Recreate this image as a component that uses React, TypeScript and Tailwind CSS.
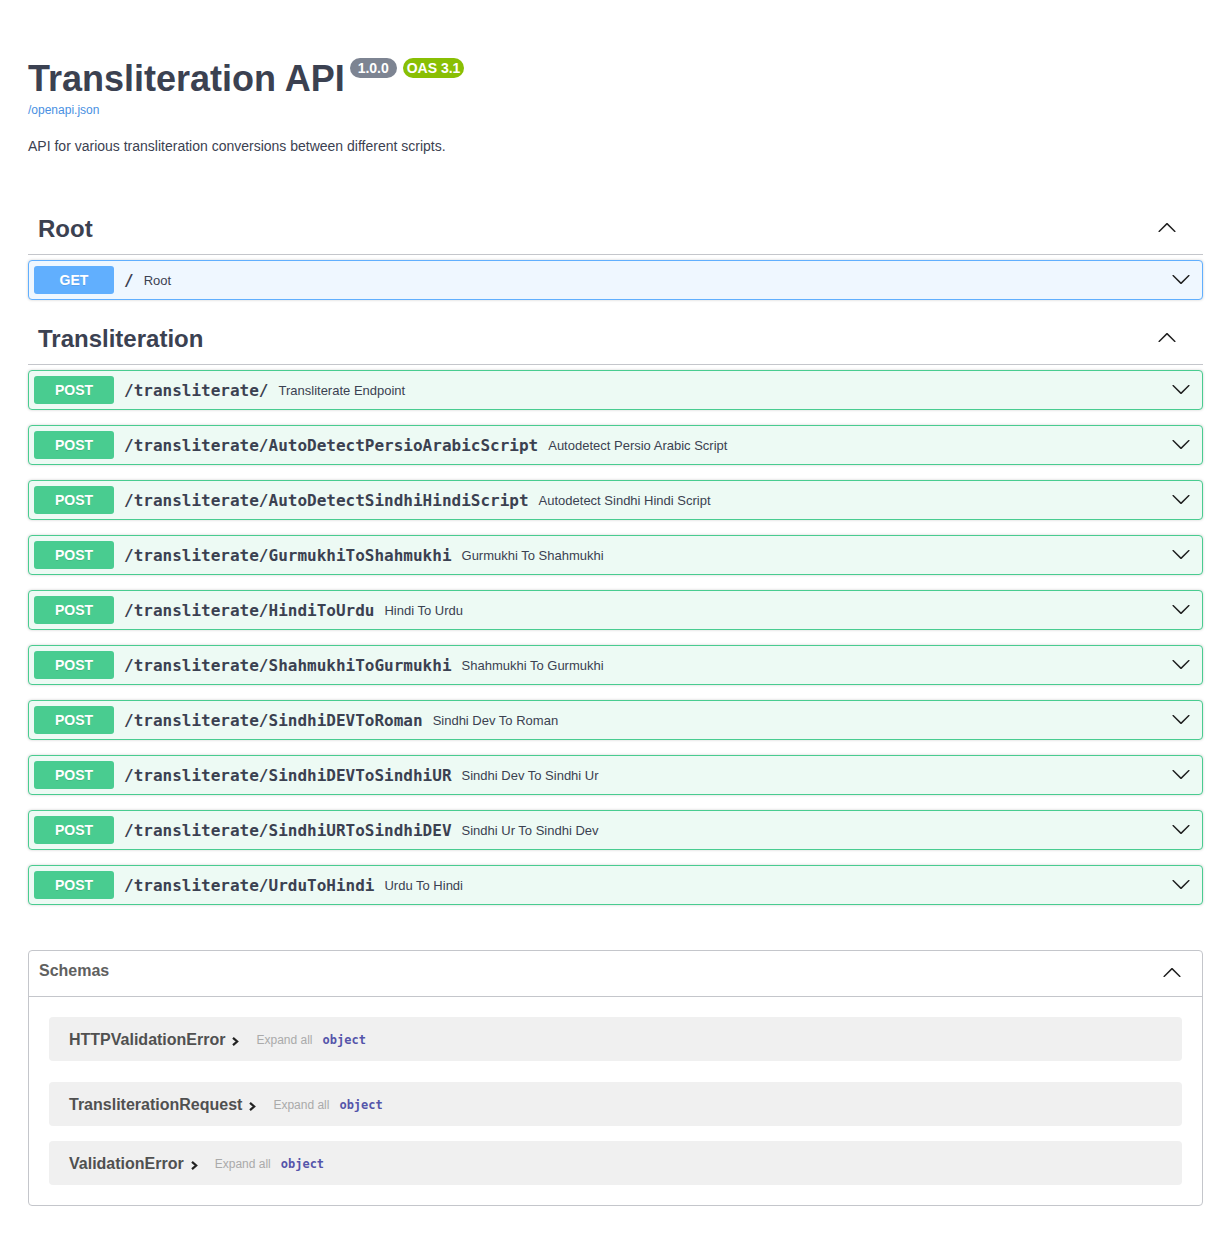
import type { ReactNode } from 'react'

const sans = "font-['Liberation_Sans',Arial,sans-serif]"
const mono = "font-['DejaVu_Sans_Mono',monospace]"

const ops = [
  { path: '/transliterate/', desc: 'Transliterate Endpoint' },
  { path: '/transliterate/AutoDetectPersioArabicScript', desc: 'Autodetect Persio Arabic Script' },
  { path: '/transliterate/AutoDetectSindhiHindiScript', desc: 'Autodetect Sindhi Hindi Script' },
  { path: '/transliterate/GurmukhiToShahmukhi', desc: 'Gurmukhi To Shahmukhi' },
  { path: '/transliterate/HindiToUrdu', desc: 'Hindi To Urdu' },
  { path: '/transliterate/ShahmukhiToGurmukhi', desc: 'Shahmukhi To Gurmukhi' },
  { path: '/transliterate/SindhiDEVToRoman', desc: 'Sindhi Dev To Roman' },
  { path: '/transliterate/SindhiDEVToSindhiUR', desc: 'Sindhi Dev To Sindhi Ur' },
  { path: '/transliterate/SindhiURToSindhiDEV', desc: 'Sindhi Ur To Sindhi Dev' },
  { path: '/transliterate/UrduToHindi', desc: 'Urdu To Hindi' },
]

const schemas = [
  { name: 'HTTPValidationError', mt: 'mt-[20px]' },
  { name: 'TransliterationRequest', mt: 'mt-[21px]' },
  { name: 'ValidationError', mt: 'mt-[15px]' },
]

function ArrowDown() {
  return (
    <svg width="20" height="20" viewBox="0 0 20 20" className="fill-[#1f1f1f]">
      <path d="M17.418 6.109c.272-.268.709-.268.979 0s.271.701 0 .969l-7.908 7.83c-.27.268-.707.268-.979 0l-7.908-7.83c-.27-.268-.27-.701 0-.969.271-.268.709-.268.979 0L10 13.25l7.418-7.141z" />
    </svg>
  )
}

function ArrowUp() {
  return (
    <svg width="20" height="20" viewBox="0 0 20 20" className="fill-[#1f1f1f]">
      <path d="M17.418 14.908c.272.268.709.268.979 0s.271-.701 0-.969l-7.908-7.83c-.27-.268-.707-.268-.979 0l-7.908 7.83c-.27.268-.27.701 0 .969.271.268.709.268.979 0L10 7.767l7.418 7.141z" />
    </svg>
  )
}

function TagHeader({ title }: { title: string }) {
  return (
    <div className="flex items-center border-b border-[#c4c6cb] pt-[9px] pb-[11px] pl-[10px] pr-[26px] mb-[5px]">
      <h3 className="flex-1 text-[24px] leading-[29px] font-bold">{title}</h3>
      <span className="mb-[4px]">
        <ArrowUp />
      </span>
    </div>
  )
}

function Op({ method, path, desc }: { method: 'GET' | 'POST'; path: string; desc: string }) {
  const get = method === 'GET'
  return (
    <div
      className={`mb-[15px] flex items-center rounded-[4px] border p-[5px] shadow-[0_0_3px_rgba(0,0,0,0.19)] ${
        get ? 'border-[#61affe] bg-[#eff7ff]' : 'border-[#49cc90] bg-[#edfaf4]'
      }`}
    >
      <span
        className={`min-w-[80px] rounded-[3px] py-[6px] text-center text-[14px] leading-[16px] font-bold text-white [text-shadow:0_1px_0_rgba(0,0,0,0.1)] ${
          get ? 'bg-[#61affe]' : 'bg-[#49cc90]'
        }`}
      >
        {method}
      </span>
      <span className={`mt-[2px] px-[10px] text-[16px] leading-[20px] font-bold ${mono}`}>{path}</span>
      <span className="mt-[2px] flex-1 text-[13px] leading-[16px]">{desc}</span>
      <span className="mr-[6px] mb-[3px]">
        <ArrowDown />
      </span>
    </div>
  )
}

function Chevron() {
  return (
    <svg width="9" height="11" viewBox="0 0 9 11" className="ml-[6px] mt-[3px]">
      <path d="M2 1.8 L6.2 5.5 L2 9.2" fill="none" stroke="#222" strokeWidth="2.2" />
    </svg>
  )
}

function Section({ children }: { children: ReactNode }) {
  return <div className="flex flex-col">{children}</div>
}

export default function App() {
  return (
    <div className={`min-h-screen bg-white px-[28px] pb-[38px] text-[#3b4151] ${sans}`}>
      <div className="pt-[58px]">
        <div className="flex items-start">
          <h1 className="text-[36px] leading-[41px] font-bold">Transliteration API</h1>
          <span className="ml-[5px] whitespace-pre rounded-full bg-[#7d8492] px-[4px] py-[2px] text-[14px] leading-[16px] font-bold text-white">
            {' 1.0.0 '}
          </span>
          <span className="ml-[6px] rounded-full bg-[#89bf04] px-[4px] py-[2px] text-[14px] leading-[16px] font-bold text-white">
            OAS 3.1
          </span>
        </div>
        <a className="mt-[4px] block text-[12px] leading-[14px] text-[#4990e2]">/openapi.json</a>
        <p className="mt-[21px] text-[14px] leading-[16px]">API for various transliteration conversions between different scripts.</p>
      </div>

      <div className="mt-[51px]">
        <Section>
          <TagHeader title="Root" />
          <Op method="GET" path="/" desc="Root" />
        </Section>
        <Section>
          <TagHeader title="Transliteration" />
          {ops.map((o) => (
            <Op key={o.path} method="POST" path={o.path} desc={o.desc} />
          ))}
        </Section>
      </div>

      <div className="mt-[30px] rounded-[4px] border border-[#c4c6cb]">
        <div className="flex items-center border-b border-[#c4c6cb] pt-[8px] pb-[14px] pl-[10px] pr-[20px]">
          <h4 className="flex-1 text-[16px] leading-[22px] font-bold text-[#606060]">Schemas</h4>
          <span className="mt-[3px]">
            <ArrowUp />
          </span>
        </div>
        <div className="px-[20px] pb-[20px]">
          {schemas.map((s) => (
            <div key={s.name} className={`${s.mt} flex h-[44px] items-center rounded-[4px] bg-[#f0f0f0] px-[20px] pt-[2px]`}>
              <span className="text-[16px] leading-[20px] font-bold text-[#505050]">{s.name}</span>
              <Chevron />
              <span className="ml-[16px] text-[12px] leading-[14px] text-[#aaaaaa]">Expand all</span>
              <span className={`ml-[10px] text-[12px] leading-[14px] font-bold text-[#55a] ${mono}`}>object</span>
            </div>
          ))}
        </div>
      </div>
    </div>
  )
}
